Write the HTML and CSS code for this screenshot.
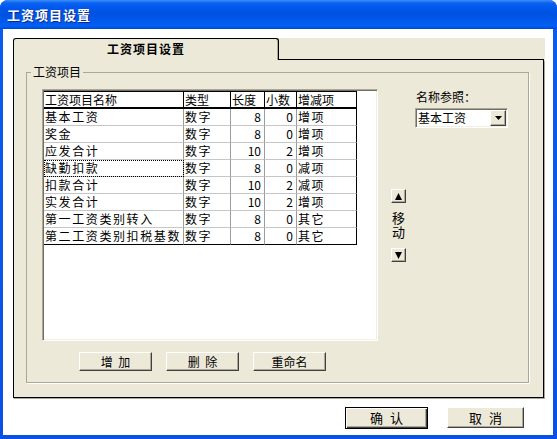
FILE: index.html
```html
<!DOCTYPE html>
<html lang="zh-CN">
<head>
<meta charset="utf-8">
<title>工资项目设置</title>
<link rel="stylesheet" href="styles.css">
</head>
<body>
<div class="window">
  <div class="titlebar"><span class="title">工资项目设置</span></div>
  <div class="frame">
    <div class="client">
      <div class="tabctl">
        <div class="tabrow">
          <div class="tab">工资项目设置</div>
          <div class="tabfill"></div>
        </div>
        <div class="panel">
          <fieldset class="group">
            <legend>工资项目</legend>
            <div class="groupbody">
              <div class="mainrow">
                <div class="listview">
                  <table class="grid">
                    <thead>
                      <tr>
                        <th class="c1">工资项目名称</th>
                        <th class="c2">类型</th>
                        <th class="c3">长度</th>
                        <th class="c4">小数</th>
                        <th class="c5">增减项</th>
                      </tr>
                    </thead>
                    <tbody>
                      <tr><td>基本工资</td><td>数字</td><td class="num">8</td><td class="num">0</td><td class="last">增项</td></tr>
                      <tr><td>奖金</td><td>数字</td><td class="num">8</td><td class="num">0</td><td class="last">增项</td></tr>
                      <tr><td>应发合计</td><td>数字</td><td class="num">10</td><td class="num">2</td><td class="last">增项</td></tr>
                      <tr><td class="focus">缺勤扣款</td><td>数字</td><td class="num">8</td><td class="num">0</td><td class="last">减项</td></tr>
                      <tr><td>扣款合计</td><td>数字</td><td class="num">10</td><td class="num">2</td><td class="last">减项</td></tr>
                      <tr><td>实发合计</td><td>数字</td><td class="num">10</td><td class="num">2</td><td class="last">增项</td></tr>
                      <tr><td>第一工资类别转入</td><td>数字</td><td class="num">8</td><td class="num">0</td><td class="last">其它</td></tr>
                      <tr class="lastrow"><td>第二工资类别扣税基数</td><td>数字</td><td class="num">8</td><td class="num">0</td><td class="last">其它</td></tr>
                    </tbody>
                  </table>
                </div>
                <div class="movecol">
                  <button class="arrow" type="button" aria-label="上移">
                    <svg width="7" height="7" viewBox="0 0 7 7"><polygon points="3.5,0 7,7 0,7" fill="#000"/></svg>
                  </button>
                  <div class="movetext">移动</div>
                  <button class="arrow" type="button" aria-label="下移">
                    <svg width="7" height="7" viewBox="0 0 7 7"><polygon points="0,0 7,0 3.5,7" fill="#000"/></svg>
                  </button>
                </div>
                <div class="refcol">
                  <div class="reflabel">名称参照：</div>
                  <div class="combo">
                    <span class="combotext">基本工资</span>
                    <span class="combobtn">
                      <svg width="7" height="4" viewBox="0 0 7 4"><polygon points="0,0 7,0 3.5,4" fill="#000"/></svg>
                    </span>
                  </div>
                </div>
              </div>
              <div class="btnrow">
                <button class="btn small" type="button">增 加</button>
                <button class="btn small" type="button">删 除</button>
                <button class="btn small" type="button">重命名</button>
              </div>
            </div>
          </fieldset>
        </div>
      </div>
      <div class="footer">
        <button class="btn dlg default" type="button">确 认</button>
        <button class="btn dlg" type="button">取 消</button>
      </div>
    </div>
  </div>
</div>
</body>
</html>
```
FILE: styles.css
```css
* { box-sizing: border-box; }

html, body {
  margin: 0;
  padding: 0;
  background: #fff;
}

body {
  width: 557px;
  height: 439px;
  overflow: hidden;
  font-family: "Noto Sans CJK SC", "Noto Sans", sans-serif;
  font-size: 12px;
  color: #000;
}

.window {
  width: 557px;
  height: 439px;
  display: flex;
  flex-direction: column;
  background: #0855ea;
  border-radius: 8px 8px 0 0;
  overflow: hidden;
}

.titlebar {
  height: 29px;
  flex: none;
  display: flex;
  align-items: center;
  padding-left: 7px;
  background: linear-gradient(to bottom,
    #3d8ef8 0px, #0a62f2 3px, #0058ee 7px, #0052e2 14px,
    #005aec 22px, #0060f4 26px, #0050e0 28px, #0046d6 29px);
}

.title {
  color: #fff;
  font-weight: bold;
  font-size: 13px;
  letter-spacing: 1px;
  line-height: 14px;
  text-shadow: 1px 1px 0 #0c2a8c;
}

.frame {
  flex: 1;
  padding: 0 4px 4px 3px;
  background: linear-gradient(to bottom, #0a5cf0, #0a50e6);
}

.client {
  height: 100%;
  background: #fff;
  padding: 9px 0 0 10px;
}

.tabctl {
  width: 532px;
  height: 361px;
  background: #ece9d8;
  display: flex;
  flex-direction: column;
}

.tabrow {
  display: flex;
  height: 22px;
  flex: none;
}

.tab {
  width: 266px;
  height: 22px;
  border: 1px solid #000;
  border-bottom: none;
  border-radius: 3px 3px 0 0;
  box-shadow: inset -1px 0 0 #aca899;
  font-weight: bold;
  letter-spacing: 1px;
  text-align: center;
  line-height: 20px;
}

.tabfill {
  width: 265px;
  height: 22px;
  border-bottom: 1px solid #000;
}

.panel {
  width: 531px;
  height: 338px;
  border: 1px solid #000;
  border-top: none;
  box-shadow: 1px 1px 0 #aca899;
  padding-left: 12px;
}

.group {
  margin: 6px 0 0 0;
  padding: 0;
  width: 503px;
  min-width: 0;
  border: 1px solid #aca899;
  box-shadow: 1px 1px 0 #fff;
}

.group legend {
  padding: 0 2px;
  margin-left: 4px;
  font-size: 12px;
  line-height: 12px;
}

.groupbody {
  padding: 11px 0 11px 15px;
}

.mainrow {
  display: flex;
  align-items: flex-start;
}

.listview {
  width: 336px;
  height: 252px;
  flex: none;
  background: #fff;
  border: 1px solid;
  border-color: #aca899 #fff #fff #aca899;
  box-shadow: inset 1px 1px 0 #716f64, inset -1px -1px 0 #f1efe2;
  padding: 1px 0 0 1px;
  overflow: hidden;
}

.grid {
  border-collapse: separate;
  border-spacing: 0;
  table-layout: fixed;
  width: 313px;
  border-top: 1px solid #000;
}

.grid th,
.grid td {
  padding: 0 1px 0 1px;
  font-weight: normal;
  text-align: left;
  white-space: nowrap;
}

.grid th {
  font-size: 12px;
  line-height: 15px;
  border-right: 1px solid #000;
  border-bottom: 2px solid #000;
}

.grid td {
  font-size: 12px;
  letter-spacing: 1.6px;
  line-height: 16px;
  border-right: 1px solid #9c9c9c;
  border-bottom: 1px solid #c6c6c6;
}

.grid .c1 { width: 140px; }
.grid .c2 { width: 47px; }
.grid .c3 { width: 34px; }
.grid .c4 { width: 32px; }
.grid .c5 { width: 60px; }

.grid td.num {
  text-align: right;
  padding-right: 3px;
  letter-spacing: 0;
}

.grid td.last {
  border-right-color: #000;
}

.grid tr.lastrow td {
  border-bottom-color: #000;
}

.grid td.focus {
  outline: 1px dotted #000;
  outline-offset: -1px;
}

.movecol {
  width: 15px;
  flex: none;
  margin-left: 13px;
  margin-top: 100px;
  display: flex;
  flex-direction: column;
  align-items: center;
}

.movetext {
  writing-mode: vertical-rl;
  font-size: 13px;
  letter-spacing: 1px;
  line-height: 15px;
  margin: 9px 0 8px;
}

.arrow {
  width: 15px;
  height: 14px;
  padding: 0;
  margin: 0;
  background: #ece9d8;
  border: 1px solid;
  border-color: #fff #404040 #404040 #fff;
  box-shadow: inset -1px -1px 0 #aca899;
  display: flex;
  align-items: center;
  justify-content: center;
}

.arrow svg { display: block; }

.refcol {
  margin-left: 9px;
  width: 93px;
  flex: none;
}

.reflabel {
  margin-top: 1px;
  padding-left: 1px;
  line-height: 14px;
}

.combo {
  margin-top: 4px;
  width: 93px;
  height: 20px;
  display: flex;
  align-items: center;
  justify-content: space-between;
  background: #fff;
  border: 1px solid;
  border-color: #aca899 #fff #fff #aca899;
  box-shadow: inset 1px 1px 0 #716f64, inset -1px -1px 0 #f1efe2;
  padding: 1px 1px 1px 2px;
}

.combotext {
  line-height: 16px;
}

.combobtn {
  width: 16px;
  height: 16px;
  background: #ece9d8;
  border: 1px solid;
  border-color: #fff #404040 #404040 #fff;
  box-shadow: inset -1px -1px 0 #aca899;
  display: flex;
  align-items: center;
  justify-content: center;
}

.combobtn svg { display: block; }

.btnrow {
  display: flex;
  gap: 14px;
  margin-top: 11px;
  padding-left: 37px;
}

.btn {
  font: inherit;
  font-size: 12px;
  word-spacing: 3px;
  color: #000;
  background: #ece9d8;
  border: 1px solid;
  border-color: #fff #404040 #404040 #fff;
  box-shadow: inset -1px -1px 0 #aca899;
  padding: 0;
  margin: 0;
  display: flex;
  align-items: center;
  justify-content: center;
  line-height: 14px;
}

.btn.small {
  width: 73px;
  height: 19px;
}

.footer {
  display: flex;
  justify-content: flex-end;
  align-items: flex-start;
  gap: 19px;
  margin-top: 8px;
  padding-right: 29px;
}

.btn.dlg {
  width: 77px;
  height: 21px;
  font-size: 13px;
  word-spacing: 4px;
  line-height: 16px;
}

.btn.default {
  width: 83px;
  height: 22px;
  border: 1px solid #000;
  box-shadow: inset 1px 1px 0 #fff, inset -1px -1px 0 #404040, inset -2px -2px 0 #aca899;
}
```
